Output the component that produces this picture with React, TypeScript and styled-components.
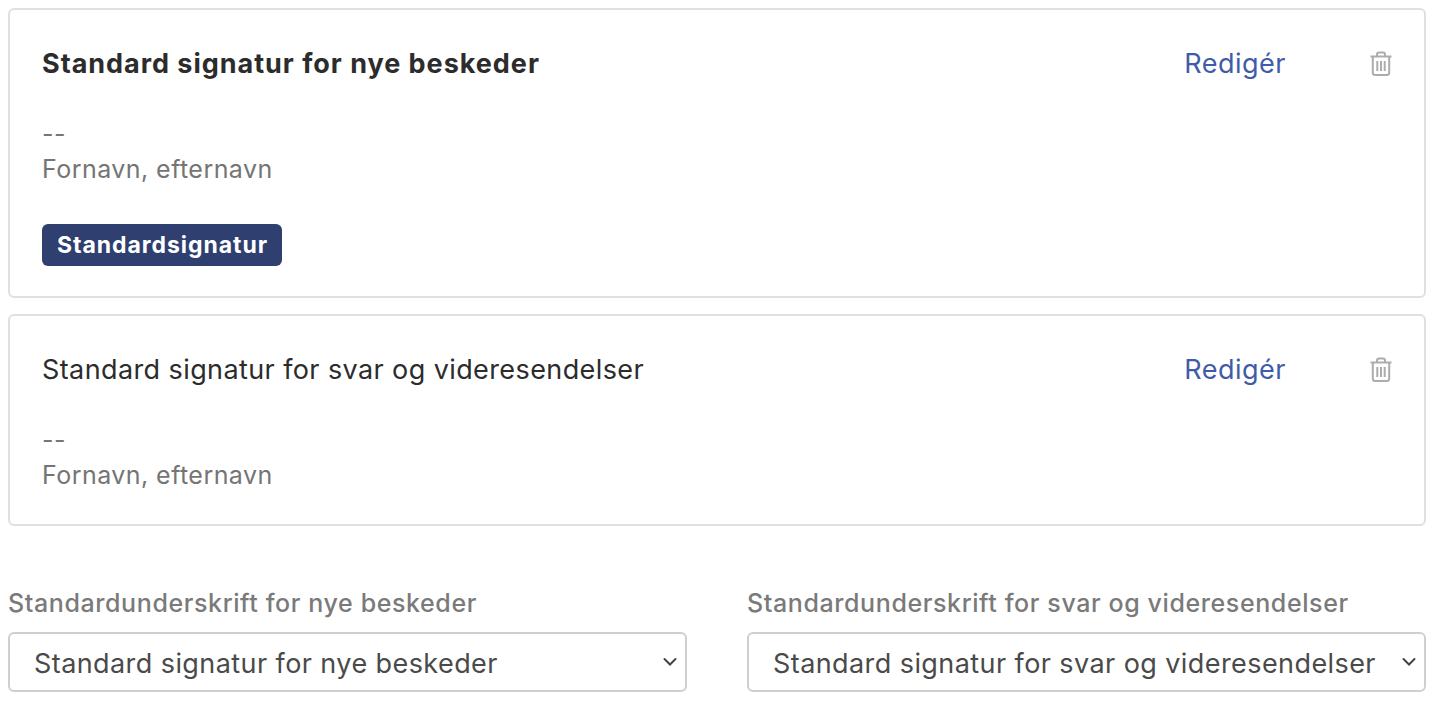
import { createGlobalStyle, styled } from "styled-components";

const signatures = [
  { id: 1, title: "Standard signatur for nye beskeder", isDefault: true },
  { id: 2, title: "Standard signatur for svar og videresendelser", isDefault: false },
];

const selects = [
  { label: "Standardunderskrift for nye beskeder", value: "Standard signatur for nye beskeder" },
  { label: "Standardunderskrift for svar og videresendelser", value: "Standard signatur for svar og videresendelser" },
];

const TrashIcon = () => (
  <svg width="24" height="26" viewBox="0 0 24 26" fill="none" stroke="#acacac" strokeWidth="2">
    <path d="M1.5 5.5h21" />
    <path d="M8 5V3.5C8 2.4 8.9 1.5 10 1.5h4c1.1 0 2 .9 2 2V5" />
    <path d="M3.8 6v15.5c0 1.4 1 2.5 2.4 2.5h11.6c1.4 0 2.4-1.1 2.4-2.5V6" />
    <path d="M8.3 10v10M12 10v10M15.7 10v10" />
  </svg>
);

const Chevron = () => (
  <svg width="14" height="9" viewBox="0 0 14 9" fill="none" stroke="#444" strokeWidth="2" strokeLinecap="round">
    <path d="M1.5 1.5 7 7l5.5-5.5" />
  </svg>
);

export default function App() {
  return (
    <Page>
      <GlobalStyle />
      <CardList>
        {signatures.map((s) => (
          <Card key={s.id}>
            <CardHead>
              <Title $bold={s.isDefault}>{s.title}</Title>
              <EditLink>Redigér</EditLink>
              <DeleteButton>
                <TrashIcon />
              </DeleteButton>
            </CardHead>
            <Body>
              <div>--</div>
              <div>Fornavn, efternavn</div>
            </Body>
            {s.isDefault && <Badge>Standardsignatur</Badge>}
          </Card>
        ))}
      </CardList>
      <SelectRow>
        {selects.map((s) => (
          <Field key={s.label}>
            <Label>{s.label}</Label>
            <SelectBox>
              <span>{s.value}</span>
              <ChevronWrap>
                <Chevron />
              </ChevronWrap>
            </SelectBox>
          </Field>
        ))}
      </SelectRow>
    </Page>
  );
}

const GlobalStyle = createGlobalStyle`
  html, body {
    margin: 0;
    background: #fff;
    overflow: hidden;
  }
  * {
    box-sizing: border-box;
  }
`;

const Page = styled.div`
  padding: 8px 9px 0 8px;
  font-family: Inter, "Liberation Sans", sans-serif;
`;

const CardList = styled.div`
  display: flex;
  flex-direction: column;
  gap: 16px;
`;

const Card = styled.div`
  border: 2px solid #e0e0e0;
  border-radius: 6px;
  padding: 36px 31px 31px 32px;
`;

const CardHead = styled.div`
  display: flex;
  align-items: center;
  height: 36px;
`;

const Title = styled.div<{ $bold: boolean }>`
  flex: 1;
  font-size: 27px;
  line-height: 36px;
  font-weight: ${({ $bold }) => ($bold ? 700 : 400)};
  letter-spacing: ${({ $bold }) => ($bold ? "0.97px" : "0.4px")};
  color: #2c2c2c;
`;

const EditLink = styled.a`
  font-size: 27px;
  line-height: 36px;
  letter-spacing: 0.5px;
  color: #3f5ca8;
  margin-right: 83px;
`;

const DeleteButton = styled.div`
  display: flex;
  width: 24px;
`;

const Body = styled.div`
  margin-top: 35px;
  font-size: 25px;
  line-height: 35px;
  letter-spacing: 0.45px;
  color: #757575;
`;

const Badge = styled.div`
  display: inline-block;
  margin-top: 37px;
  margin-bottom: -1px;
  padding: 0 14px 0 15px;
  height: 42px;
  line-height: 42px;
  border-radius: 6px;
  background: #2e3f70;
  color: #fff;
  font-size: 23px;
  letter-spacing: 0.95px;
  font-weight: 700;
`;

const SelectRow = styled.div`
  display: grid;
  grid-template-columns: 1fr 1fr;
  gap: 60px;
  margin-top: 59px;
`;

const Field = styled.div`
  display: flex;
  flex-direction: column;
`;

const Label = styled.label`
  font-size: 25px;
  line-height: 36px;
  letter-spacing: 0.6px;
  font-weight: 500;
  color: #7a7a7a;
  margin-bottom: 11px;
`;

const SelectBox = styled.div`
  position: relative;
  display: flex;
  align-items: center;
  height: 60px;
  padding: 2px 0 0 24px;
  border: 2px solid #cfcfcf;
  border-radius: 6px;
  font-size: 27px;
  letter-spacing: 0.42px;
  color: #4a4a4a;
`;

const ChevronWrap = styled.span`
  position: absolute;
  right: 8px;
  top: 50%;
  transform: translateY(-50%);
  display: flex;
`;
